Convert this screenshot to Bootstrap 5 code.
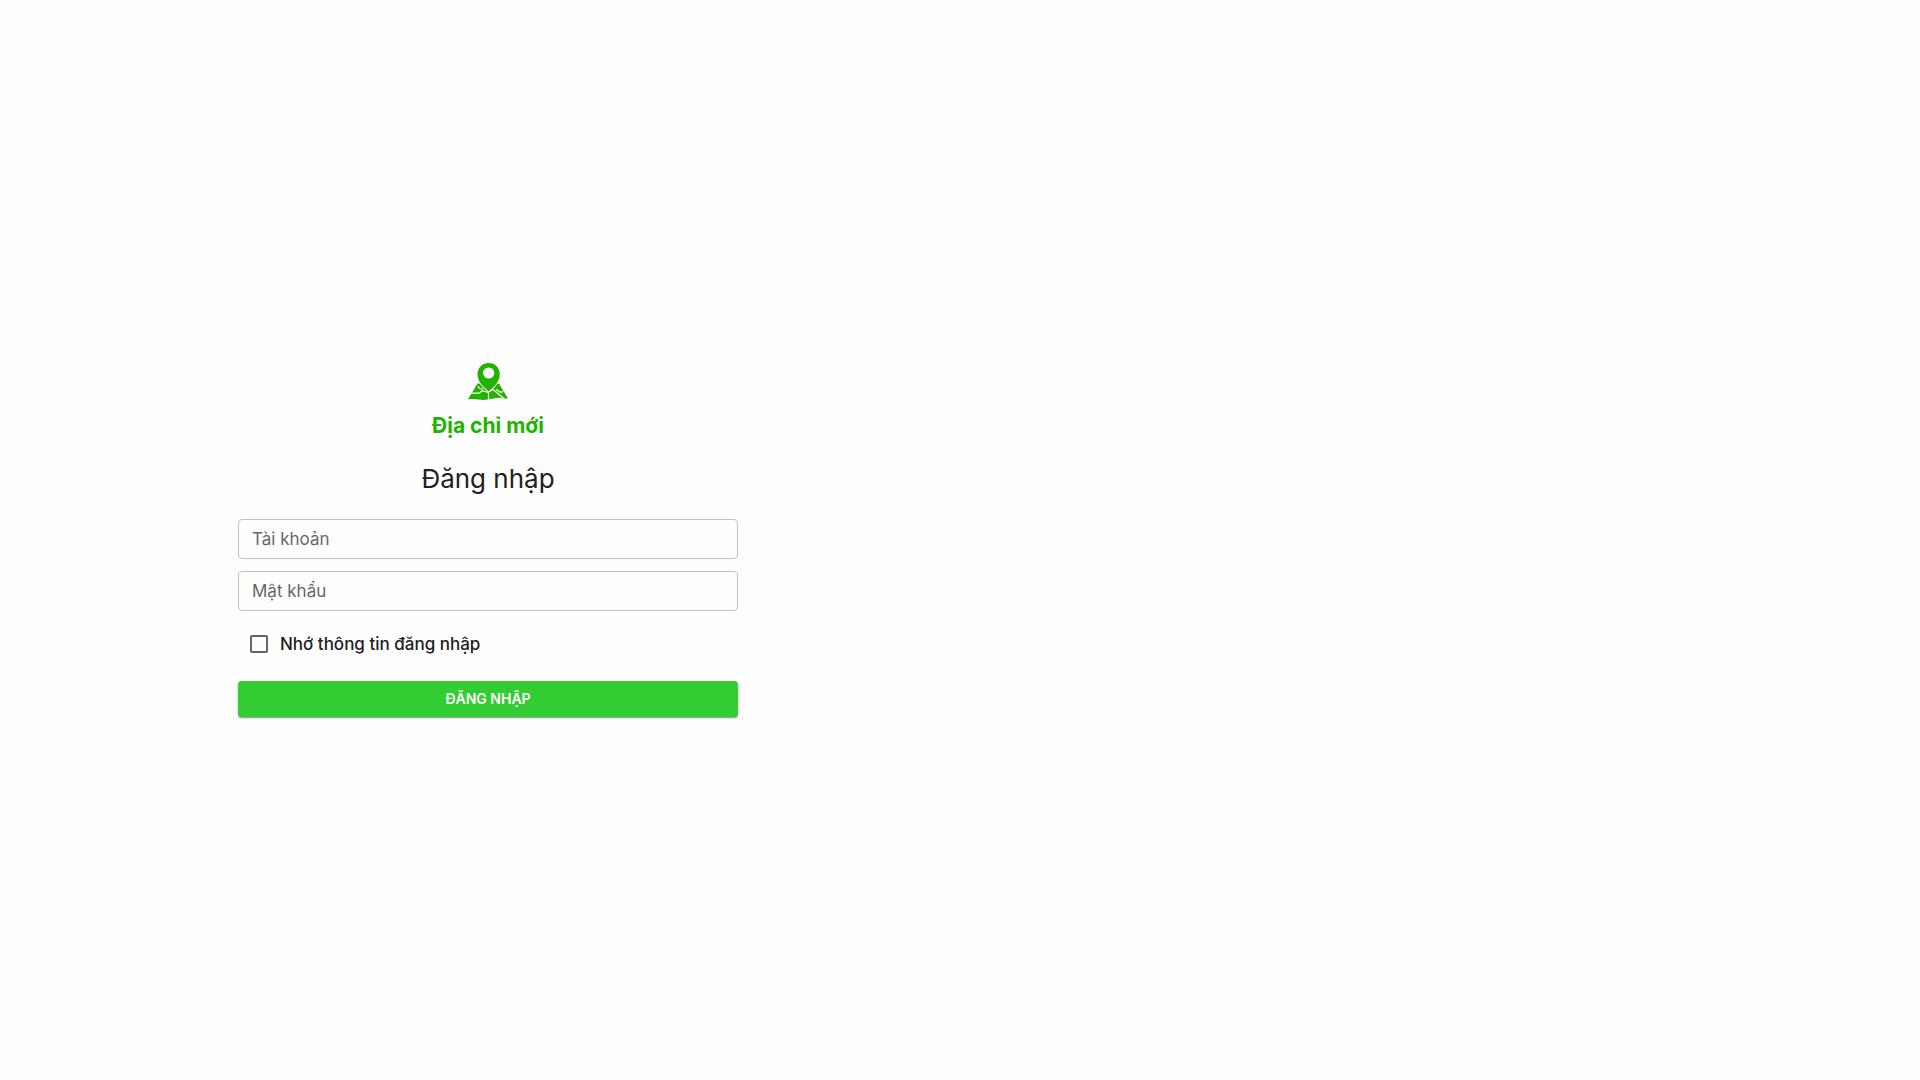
<!DOCTYPE html>
<html lang="vi">
<head>
<meta charset="utf-8">
<meta name="viewport" content="width=device-width, initial-scale=1">
<title>Đăng nhập</title>
<link href="https://cdn.jsdelivr.net/npm/bootstrap@5.3.0/dist/css/bootstrap.min.css" rel="stylesheet">
<style>
  body { font-family: Inter, "Noto Sans", sans-serif; background: #fefefe; color: #212121; }
  .login-form { max-width: 500px; }
  .brand-icon { width: 40px; height: 40px; }
  .brand-name { font-size: 21px; line-height: 30px; color: #22b300; }
  .login-title { font-size: 26px; line-height: 32px; margin: 22px 0 24px; }
  .login-field { height: 40px; padding: 0 13px; font-size: 17px; background: transparent; border-color: #c0c0c0; border-radius: 4px; color: #212121; }
  /* The label lies over the empty field and gives way once the field is used */
  .field-label { left: 14px; font-size: 17px; line-height: 40px; color: #666; pointer-events: none; }
  .login-field:focus + .field-label, .login-field:not(:placeholder-shown) + .field-label { opacity: 0; }
  .stack-gap { gap: 12px; }
  .remember-row { height: 42px; padding-left: 12px; }
  .remember-label { font-size: 17px; line-height: 24px; }
  .form-check-input[type=checkbox].remember-box { width: 18px; height: 18px; border: 2px solid #666; border-radius: 2px; background-color: transparent; }
  .form-check-input[type=checkbox].remember-box:checked { background-color: #32cd32; border-color: #32cd32; }
  .btn-login { --bs-btn-bg: #32cd32; --bs-btn-color: #fff; --bs-btn-hover-bg: #28b428; --bs-btn-hover-color: #fff; --bs-btn-active-bg: #28b428; --bs-btn-active-color: #fff;
    height: 36px; padding: 0 16px; border: 0; border-radius: 4px; font-size: 14px; line-height: 36px;
    box-shadow: 0 1px 1px rgba(0,0,0,.35), 0 1px 3px rgba(0,0,0,.14); }
</style>
</head>
<body>
<main class="container-fluid px-0">
  <div class="row g-0 min-vh-100 align-items-center">
    <div class="col-lg-6 ps-3">
      <form class="login-form mx-auto">
        <header class="text-center">
          <svg class="brand-icon d-block mx-auto" viewBox="8 8 40 40" aria-hidden="true">
            <path fill="#22b300" d="M17.500 28.500H39L47.700 43Q48 44 44 43.200Q40 42.400 36 43L29 44.300Q24 45.300 19 44.600Q14 43.800 8 44.200Z"/>
            <path fill="none" stroke="#fefefe" stroke-width="1.200" d="M11 38.200H19.500L22 35.600L28.500 37.500M28.500 36V46M28.500 37L33 34.500L44 43.500M36 34.500L41 37.500L43 36M18 31L19.500 33.500L23 34"/>
            <path fill="#22b300" stroke="#fefefe" stroke-width="2" paint-order="stroke" d="M28.700 8C22.200 8 17.500 12.900 17.500 19C17.500 25.500 21.500 31 28.700 36.300C35.900 31 39.700 25.500 39.700 19C39.700 12.900 35 8 28.700 8Z"/>
            <circle cx="28.700" cy="18" r="5.600" fill="#fefefe"/>
          </svg>
          <div class="brand-name fw-bold mt-2">Địa chỉ mới</div>
          <h1 class="login-title fw-normal">Đăng nhập</h1>
        </header>
        <div class="d-flex flex-column stack-gap">
          <div class="position-relative">
            <input class="form-control login-field" id="account" type="text" placeholder=" " autocomplete="username">
            <label class="field-label position-absolute top-0" for="account">Tài khoản</label>
          </div>
          <div class="position-relative">
            <input class="form-control login-field" id="password" type="password" placeholder=" " autocomplete="current-password">
            <label class="field-label position-absolute top-0" for="password">Mật khẩu</label>
          </div>
          <div class="remember-row d-flex align-items-center stack-gap">
            <input class="form-check-input remember-box m-0" id="remember" type="checkbox">
            <label class="remember-label fw-medium" for="remember">Nhớ thông tin đăng nhập</label>
          </div>
        </div>
        <button class="btn btn-login w-100 mt-3 fw-semibold text-uppercase" type="submit">Đăng nhập</button>
      </form>
    </div>
  </div>
</main>
<script src="https://cdn.jsdelivr.net/npm/bootstrap@5.3.0/dist/js/bootstrap.bundle.min.js"></script>
</body>
</html>
